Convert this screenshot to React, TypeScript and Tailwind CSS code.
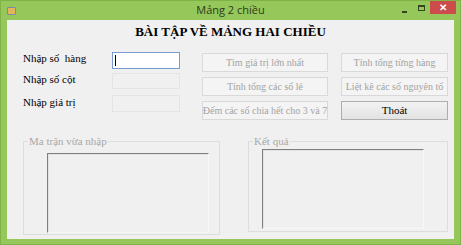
import React from 'react';

const serifCls = "font-['Liberation_Serif','Times_New_Roman',serif]";

// nút bị vô hiệu hoá giống WinForms
const DisabledButton = ({ label }: { label: string }) => (
  <div
    className={`h-[19px] flex items-center justify-center border border-[#d9d9d9] bg-[#f4f4f4] text-[10px] text-[#a3a3a3] whitespace-nowrap ${serifCls}`}
  >
    {label}
  </div>
);

const ReadonlyBox = ({ className }: { className: string }) => (
  <div
    className={`border border-t-[#7f7f7f] border-l-[#7f7f7f] border-r-[#f7f7f7] border-b-[#f7f7f7] bg-[#f0f0f0] shadow-[inset_1px_1px_0_#e3e3e3] ${className}`}
  />
);

export default function App() {
  return (
    <div className="w-[461px] h-[245px] bg-[#95c75a] border border-[#7fb347] flex flex-col overflow-hidden">
      {/* thanh tiêu đề */}
      <div className="h-[19px] grid grid-cols-[80px_1fr_80px] items-center">
        <div className="flex items-center">
          <div className="ml-[6px] w-[9px] h-[8px] mt-[1px] bg-[#e0b85a] border border-[#7a8aa8] rounded-[1px]" />
        </div>
        <div className="text-center text-[11px] text-[#2d3a20] font-['Open_Sans','Noto_Sans',sans-serif]">
          Mảng 2 chiều
        </div>
        <div className="flex items-start justify-end h-full mr-[4px]">
          <div className="w-[5px] h-[2px] mt-[10px] bg-[#34461f]" />
          <div className="ml-[11px] mt-[4px] w-[7px] h-[6px] border border-[#34461f] border-t-2" />
          <div className="ml-[5px] w-[26px] h-[14px] -mt-[1px] bg-[#cc4b4b] flex items-center justify-center text-white text-[10px] font-bold">
            ✕
          </div>
        </div>
      </div>

      {/* vùng client */}
      <div className={`ml-[6px] w-[447px] h-[219px] bg-[#f0f0f0] flex flex-col ${serifCls}`}>
        <h1 className={`mt-[4px] h-[16px] leading-[16px] text-center font-bold text-[13px] text-black ${serifCls}`}>
          BÀI TẬP VỀ MẢNG HAI CHIỀU
        </h1>

        <div className="flex mt-[12px]">
          {/* nhập liệu */}
          <div className={`w-[195px] pl-[16px] flex flex-col text-[11px] text-black ${serifCls}`}>
            <div className="flex items-start h-[17px]">
              <span className="w-[89px] -mt-[2px]">Nhập số&nbsp; hàng</span>
              <div className="w-[68px] h-[17px] border border-[#7a9bd0] bg-white flex items-center pl-[2px]">
                <div className="w-[1px] h-[11px] bg-black" />
              </div>
            </div>
            <div className="flex items-start h-[16px] mt-[4px]">
              <span className="w-[89px] -mt-[2px]">Nhập số cột</span>
              <div className="w-[68px] h-[16px] border border-[#e4e4e4] bg-[#f0f0f0]" />
            </div>
            <div className="flex items-start h-[17px] mt-[6px]">
              <span className="w-[89px] -mt-[1px]">Nhập giá trị</span>
              <div className="w-[68px] h-[17px] border border-[#e4e4e4] bg-[#f0f0f0]" />
            </div>
          </div>

          {/* các nút */}
          <div className="grid grid-cols-[126px_107px] gap-x-[13px] gap-y-[5px] mt-[1px]">
            <DisabledButton label="Tìm giá trị lớn nhất" />
            <DisabledButton label="Tính tổng từng hàng" />
            <DisabledButton label="Tính tổng các số lẻ" />
            <DisabledButton label="Liệt kê các số nguyên tố" />
            <DisabledButton label="Đếm các số chia hết cho 3 và 7" />
            <div
              className={`h-[19px] flex items-center justify-center border border-[#adadad] bg-gradient-to-b from-[#f2f2f2] to-[#e3e3e3] text-[11px] text-black ${serifCls}`}
            >
              Thoát
            </div>
          </div>
        </div>

        {/* nhóm kết quả */}
        <div className={`flex mt-[15px] text-[11px] ${serifCls}`}>
          <fieldset className="ml-[16px] w-[197px] h-[100px] border border-[#dddddd] flex flex-col">
            <legend className="ml-[4px] px-[1px] text-[#a8a8a8] leading-[12px]">Ma trận vừa nhập</legend>
            <ReadonlyBox className="ml-[23px] mt-[6px] w-[162px] h-[80px]" />
          </fieldset>
          <fieldset className="ml-[28px] w-[200px] h-[97px] border border-[#dddddd] flex flex-col">
            <legend className="ml-[4px] px-[1px] text-[#a8a8a8] leading-[12px]">Kết quả</legend>
            <ReadonlyBox className="ml-[13px] mt-[2px] w-[162px] h-[80px]" />
          </fieldset>
        </div>
      </div>
    </div>
  );
}
